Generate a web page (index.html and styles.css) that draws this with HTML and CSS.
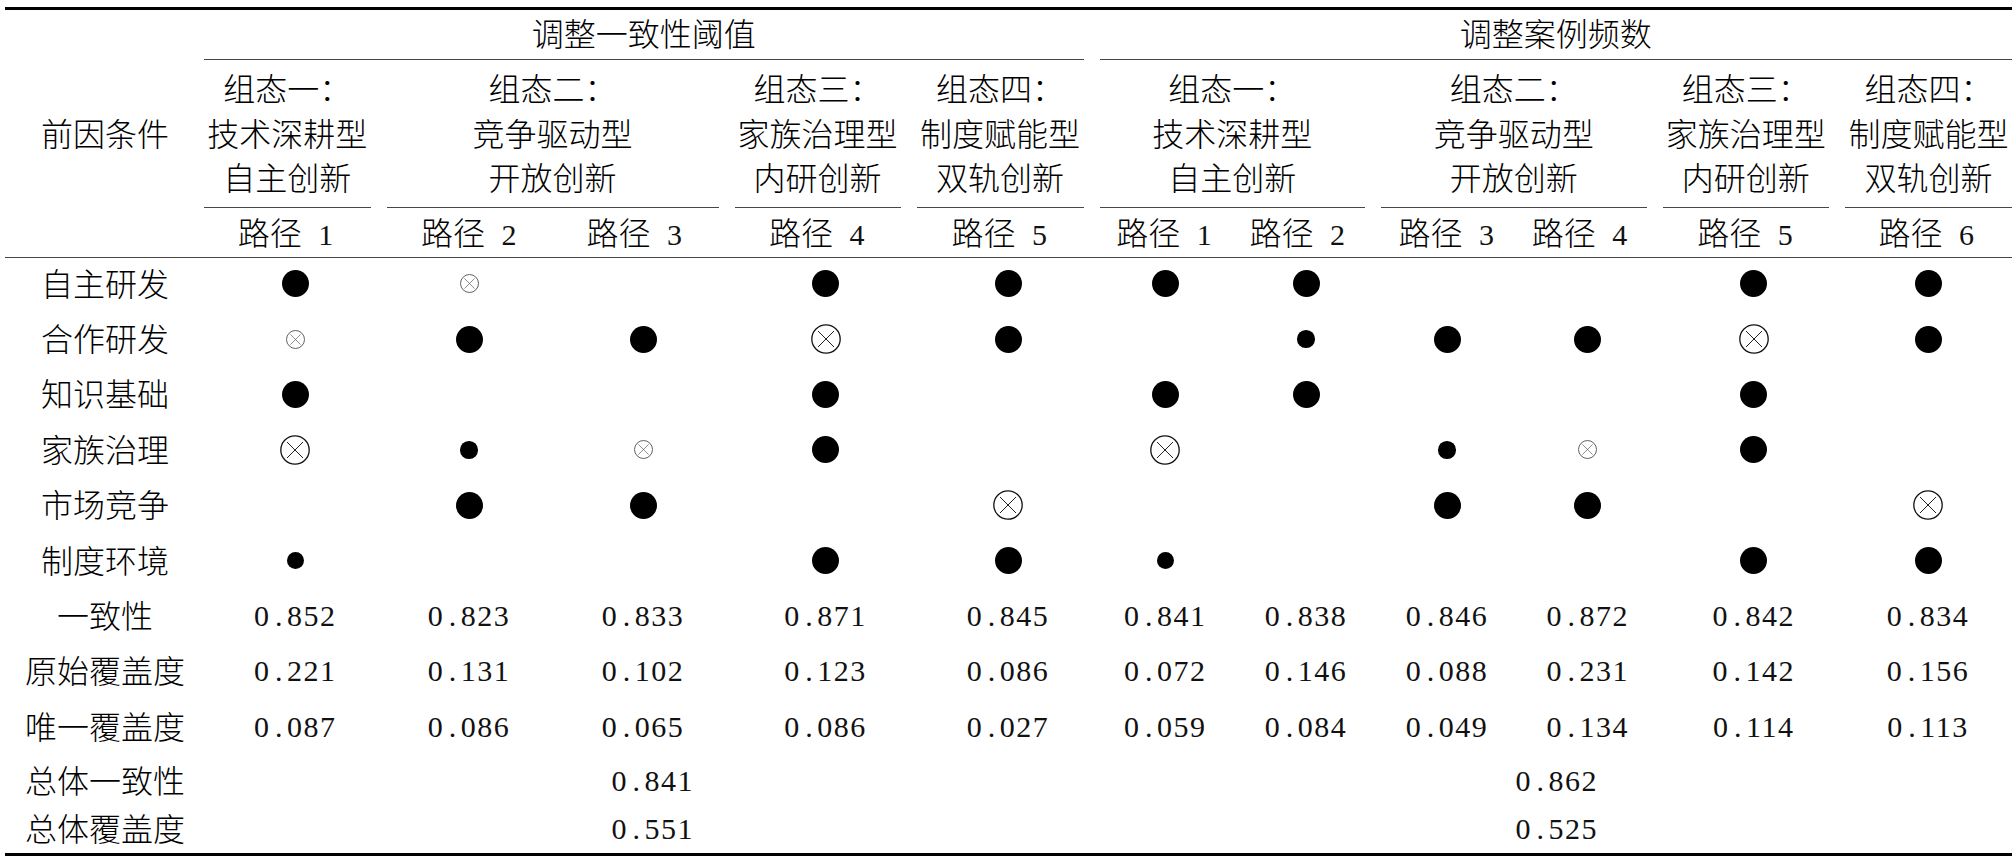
FILE: index.html
```html
<!DOCTYPE html>
<html lang="zh-CN">
<head>
<meta charset="utf-8">
<title>组态分析稳健性检验</title>
<link rel="stylesheet" href="styles.css">
</head>
<body>
<svg class="sprite" xmlns="http://www.w3.org/2000/svg">
  <symbol id="ox" viewBox="0 0 30 30">
    <circle cx="15" cy="15" r="14.2" fill="none" stroke="#111" stroke-width="1.3"/>
    <path d="M7 7L23 23M23 7L7 23" fill="none" stroke="#222" stroke-width="1"/>
  </symbol>
</svg>
<div class="tbl">
  <div class="corner">前因条件</div>
  <div class="grp g1">调整一致性阈值</div>
  <div class="grp g2">调整案例频数</div>

  <div class="cfg">组态一：<br>技术深耕型<br>自主创新</div>
  <div class="cfg w2">组态二：<br>竞争驱动型<br>开放创新</div>
  <div class="cfg">组态三：<br>家族治理型<br>内研创新</div>
  <div class="cfg">组态四：<br>制度赋能型<br>双轨创新</div>
  <div class="cfg w2">组态一：<br>技术深耕型<br>自主创新</div>
  <div class="cfg w2">组态二：<br>竞争驱动型<br>开放创新</div>
  <div class="cfg">组态三：<br>家族治理型<br>内研创新</div>
  <div class="cfg last">组态四：<br>制度赋能型<br>双轨创新</div>

  <div class="ph">
    <div><span>路径<span class="n">1</span></span></div>
    <div><span>路径<span class="n">2</span></span></div>
    <div><span>路径<span class="n">3</span></span></div>
    <div><span>路径<span class="n">4</span></span></div>
    <div><span>路径<span class="n">5</span></span></div>
    <div><span>路径<span class="n">1</span></span></div>
    <div><span>路径<span class="n">2</span></span></div>
    <div><span>路径<span class="n">3</span></span></div>
    <div><span>路径<span class="n">4</span></span></div>
    <div><span>路径<span class="n">5</span></span></div>
    <div><span>路径<span class="n">6</span></span></div>
  </div>

  <div class="row">
    <div class="lab">自主研发</div>
    <div><span class="bd"></span></div>
    <div><svg class="sx"><use href="#ox"/></svg></div>
    <div></div>
    <div><span class="bd"></span></div>
    <div><span class="bd"></span></div>
    <div><span class="bd"></span></div>
    <div><span class="bd"></span></div>
    <div></div>
    <div></div>
    <div><span class="bd"></span></div>
    <div><span class="bd"></span></div>
  </div>

  <div class="row">
    <div class="lab">合作研发</div>
    <div><svg class="sx"><use href="#ox"/></svg></div>
    <div><span class="bd"></span></div>
    <div><span class="bd"></span></div>
    <div><svg class="bx"><use href="#ox"/></svg></div>
    <div><span class="bd"></span></div>
    <div></div>
    <div><span class="sd"></span></div>
    <div><span class="bd"></span></div>
    <div><span class="bd"></span></div>
    <div><svg class="bx"><use href="#ox"/></svg></div>
    <div><span class="bd"></span></div>
  </div>

  <div class="row">
    <div class="lab">知识基础</div>
    <div><span class="bd"></span></div>
    <div></div>
    <div></div>
    <div><span class="bd"></span></div>
    <div></div>
    <div><span class="bd"></span></div>
    <div><span class="bd"></span></div>
    <div></div>
    <div></div>
    <div><span class="bd"></span></div>
    <div></div>
  </div>

  <div class="row">
    <div class="lab">家族治理</div>
    <div><svg class="bx"><use href="#ox"/></svg></div>
    <div><span class="sd"></span></div>
    <div><svg class="sx"><use href="#ox"/></svg></div>
    <div><span class="bd"></span></div>
    <div></div>
    <div><svg class="bx"><use href="#ox"/></svg></div>
    <div></div>
    <div><span class="sd"></span></div>
    <div><svg class="sx"><use href="#ox"/></svg></div>
    <div><span class="bd"></span></div>
    <div></div>
  </div>

  <div class="row">
    <div class="lab">市场竞争</div>
    <div></div>
    <div><span class="bd"></span></div>
    <div><span class="bd"></span></div>
    <div></div>
    <div><svg class="bx"><use href="#ox"/></svg></div>
    <div></div>
    <div></div>
    <div><span class="bd"></span></div>
    <div><span class="bd"></span></div>
    <div></div>
    <div><svg class="bx"><use href="#ox"/></svg></div>
  </div>

  <div class="row">
    <div class="lab">制度环境</div>
    <div><span class="sd"></span></div>
    <div></div>
    <div></div>
    <div><span class="bd"></span></div>
    <div><span class="bd"></span></div>
    <div><span class="sd"></span></div>
    <div></div>
    <div></div>
    <div></div>
    <div><span class="bd"></span></div>
    <div><span class="bd"></span></div>
  </div>

  <div class="row">
    <div class="lab">一致性</div>
    <div><span class="n">0<span class="dp">.</span>852</span></div>
    <div><span class="n">0<span class="dp">.</span>823</span></div>
    <div><span class="n">0<span class="dp">.</span>833</span></div>
    <div><span class="n">0<span class="dp">.</span>871</span></div>
    <div><span class="n">0<span class="dp">.</span>845</span></div>
    <div><span class="n">0<span class="dp">.</span>841</span></div>
    <div><span class="n">0<span class="dp">.</span>838</span></div>
    <div><span class="n">0<span class="dp">.</span>846</span></div>
    <div><span class="n">0<span class="dp">.</span>872</span></div>
    <div><span class="n">0<span class="dp">.</span>842</span></div>
    <div><span class="n">0<span class="dp">.</span>834</span></div>
  </div>

  <div class="row">
    <div class="lab">原始覆盖度</div>
    <div><span class="n">0<span class="dp">.</span>221</span></div>
    <div><span class="n">0<span class="dp">.</span>131</span></div>
    <div><span class="n">0<span class="dp">.</span>102</span></div>
    <div><span class="n">0<span class="dp">.</span>123</span></div>
    <div><span class="n">0<span class="dp">.</span>086</span></div>
    <div><span class="n">0<span class="dp">.</span>072</span></div>
    <div><span class="n">0<span class="dp">.</span>146</span></div>
    <div><span class="n">0<span class="dp">.</span>088</span></div>
    <div><span class="n">0<span class="dp">.</span>231</span></div>
    <div><span class="n">0<span class="dp">.</span>142</span></div>
    <div><span class="n">0<span class="dp">.</span>156</span></div>
  </div>

  <div class="row">
    <div class="lab">唯一覆盖度</div>
    <div><span class="n">0<span class="dp">.</span>087</span></div>
    <div><span class="n">0<span class="dp">.</span>086</span></div>
    <div><span class="n">0<span class="dp">.</span>065</span></div>
    <div><span class="n">0<span class="dp">.</span>086</span></div>
    <div><span class="n">0<span class="dp">.</span>027</span></div>
    <div><span class="n">0<span class="dp">.</span>059</span></div>
    <div><span class="n">0<span class="dp">.</span>084</span></div>
    <div><span class="n">0<span class="dp">.</span>049</span></div>
    <div><span class="n">0<span class="dp">.</span>134</span></div>
    <div><span class="n">0<span class="dp">.</span>114</span></div>
    <div><span class="n">0<span class="dp">.</span>113</span></div>
  </div>

  <div class="row tot">
    <div class="lab">总体一致性</div>
    <div><span class="n">0<span class="dp">.</span>841</span></div>
    <div><span class="n">0<span class="dp">.</span>862</span></div>
  </div>

  <div class="row tot">
    <div class="lab">总体覆盖度</div>
    <div><span class="n">0<span class="dp">.</span>551</span></div>
    <div><span class="n">0<span class="dp">.</span>525</span></div>
  </div>
</div>
</body>
</html>
```

FILE: styles.css
```css
html, body {
  margin: 0;
  padding: 0;
  background: #ffffff;
}

body {
  color: #000000;
  font-family: "Noto Sans CJK SC", "Noto Sans CJK JP", sans-serif;
  font-weight: 300;
  font-size: 32px;
}

.sprite {
  display: none;
}

.tbl {
  display: grid;
  width: 2007px;
  margin: 7px 0 0 5px;
  grid-template-columns: 191px 182.5px 174px 174px 182px 183px 140.5px 141px 141px 140.5px 182.5px 175px;
  grid-template-rows: 50px 148px 50px repeat(9, 55.4px) 48px 48.4px;
  border-top: 3px solid #000;
  border-bottom: 3px solid #000;
}

.corner {
  grid-column: 1;
  grid-row: 1 / span 3;
  display: flex;
  align-items: center;
  justify-content: center;
  padding: 0 0 3px 9px;
  border-bottom: 1px solid #474747;
}

.grp {
  display: flex;
  align-items: center;
  justify-content: center;
  margin: 0 8px;
  padding-bottom: 6px;
  border-bottom: 1px solid #474747;
  white-space: nowrap;
}

.g1 {
  grid-column: span 5;
}

.g2 {
  grid-column: span 6;
  margin-right: 0;
}

.cfg {
  margin: 0 8px;
  padding-top: 5px;
  line-height: 44.5px;
  text-align: center;
  white-space: nowrap;
  border-bottom: 1px solid #474747;
}

.cfg.w2 {
  grid-column: span 2;
}

.cfg.last {
  margin-right: 0;
}

.ph,
.row {
  display: contents;
}

.ph > div {
  display: flex;
  align-items: center;
  justify-content: center;
  padding-bottom: 4px;
  border-bottom: 1px solid #474747;
  white-space: nowrap;
}

.ph .n {
  margin-left: 16.5px;
}

.ph > :nth-child(1) { padding-right: 2px; }
.ph > :nth-child(2) { padding-left: 8px; }
.ph > :nth-child(3) { padding-right: 9px; }
.ph > :nth-child(6) { padding-left: 6px; }
.ph > :nth-child(7) { padding-right: 9px; }
.ph > :nth-child(8) { padding-left: 7px; }
.ph > :nth-child(9) { padding-right: 8px; }
.ph > :nth-child(11) { padding-left: 5px; }

.row > div {
  display: flex;
  align-items: center;
  justify-content: center;
  padding: 0 0 4px 7px;
  white-space: nowrap;
}

.row > :nth-child(2),
.row > :nth-child(5),
.row > :nth-child(6),
.row > :nth-child(11) {
  padding-left: 16px;
}

.row > .lab {
  padding: 0 0 8px 9px;
}

.row.tot > .lab {
  padding: 0 0 4px 9px;
}

.row.tot > :nth-child(2) {
  grid-column: span 5;
  padding: 0 0 0 18px;
}

.row.tot > :nth-child(3) {
  grid-column: span 6;
  padding: 0 0 0 10px;
}

.n {
  font-family: "Liberation Serif", "Times New Roman", serif;
  font-weight: 400;
  font-size: 30px;
  letter-spacing: 1.5px;
  color: #111;
}

.dp {
  display: inline-block;
  width: 16.5px;
  letter-spacing: 0;
  text-align: center;
}

.bd {
  display: block;
  width: 27px;
  height: 27px;
  border-radius: 50%;
  background: #000;
}

.sd {
  display: block;
  width: 17.5px;
  height: 17.5px;
  border-radius: 50%;
  background: #000;
}

.bx {
  display: block;
  width: 30px;
  height: 30px;
}

.sx {
  display: block;
  width: 19px;
  height: 19px;
  opacity: 0.8;
}
```
